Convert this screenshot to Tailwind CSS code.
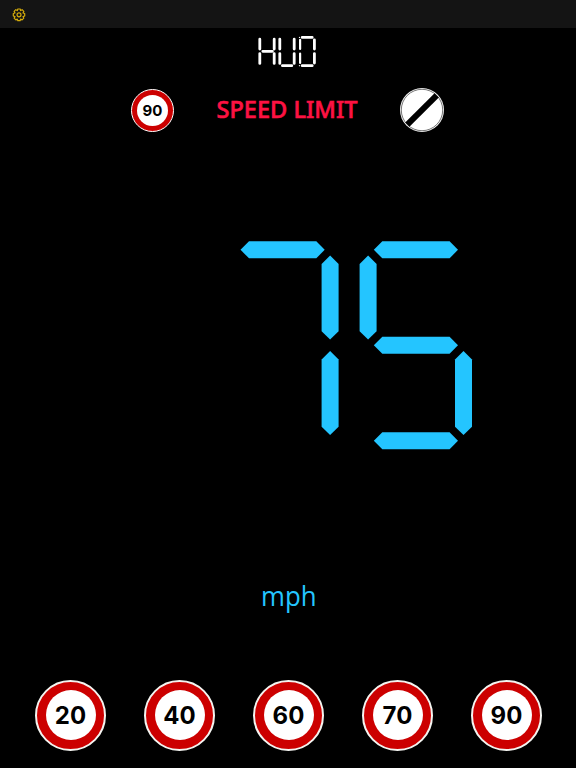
<!DOCTYPE html>
<html lang="en">
<head>
<meta charset="utf-8">
<title>HUD</title>
<script src="https://cdn.jsdelivr.net/npm/@tailwindcss/browser@4"></script>
</head>
<body class="bg-black">
<div class="flex h-[768px] w-[576px] flex-col overflow-hidden bg-black">
  <header class="flex h-7 shrink-0 items-center bg-[#141414] pl-3">
    <svg class="mt-px size-3.5" viewBox="0 0 14 14" fill="none" stroke="#d3ab0b">
      <path stroke-width="1.2" stroke-linejoin="round" d="M5.800 1h2.400l.4 1.600 1.500-.9 1.700 1.700-.8 1.600 1.700.5v2.500l-1.700.6.8 1.600-1.700 1.700-1.500-.8-.5 1.600H5.800l-.5-1.600-1.500.8-1.700-1.700.9-1.600-1.700-.6V5.500l1.700-.5-.9-1.600 1.700-1.700 1.500.9z"/>
      <circle cx="7" cy="6.800" r="2" stroke-width="1.200"/>
    </svg>
  </header>

  <div class="flex h-[47px] shrink-0 justify-center">
    <svg class="mt-2 h-8 w-[60px]" viewBox="257.500 36 60 32" role="img" aria-label="HUD" stroke="#fff" stroke-width="2.800" stroke-linecap="round">
      <path d="M259.300 39.200v9.800M259.300 53.600v9.800M262.300 51.300h9.600M273.700 39.200v9.800M273.700 53.600v9.800"/>
      <path d="M279.300 39.200v9.800M279.300 53.600v9.800M293.700 39.200v9.800M293.700 53.600v9.800M281.900 65.700h9.400"/>
      <path d="M301.700 37.400h10M313.900 39.800v9.200M313.900 53.600v9.400M301.700 65.700h10"/>
      <path stroke-width="2.200" d="M299.600 39.800v9.200M299.600 53.600v9.400"/>
      <path stroke-width="1.300" d="M299 37.300v.1M299 65.600v.1"/>
    </svg>
  </div>

  <div class="flex h-[70px] shrink-0 items-center justify-between pr-[132px] pl-[131px]">
    <div class="flex size-[43px] items-center justify-center rounded-full border border-white bg-[#cc0000]">
      <div class="flex size-[31px] items-center justify-center rounded-full bg-white pt-px font-[Inter,sans-serif] text-[15px] leading-none font-bold">90</div>
    </div>
    <svg class="block h-9 w-[144px] font-['Noto_Sans',sans-serif] text-[24px] font-medium" viewBox="0 0 144 36"><text x="1.500" y="25.500" textLength="141" lengthAdjust="spacingAndGlyphs" fill="#fd1242" stroke="#fd1242" stroke-width=".6">SPEED LIMIT</text></svg>
    <svg class="size-11" viewBox="0 0 44 44">
      <circle cx="22" cy="22" r="22" fill="#f4f4f4"/>
      <circle cx="22" cy="22" r="20.700" fill="#fff" stroke="#555" stroke-width=".8"/>
      <path d="M7.300 36.700 36.700 7.300" stroke="#000" stroke-width="6"/>
    </svg>
  </div>

  <main class="flex h-[405px] shrink-0 flex-col pt-[96px] pl-[240px]">
    <svg class="h-[209px] w-[233px]" viewBox="240 241 233 209" role="img" aria-label="75" fill="#24c5ff">
      <defs>
        <path id="bar" d="M0 8.500 8.500 0h67.300L84.200 8.500 75.800 17H8.500z"/>
        <path id="post" d="M8.500 0 17 8.500v67.300L8.500 84.200 0 75.800V8.500z"/>
      </defs>
      <use href="#bar" x="240.500" y="241.300"/>
      <use href="#post" x="321.600" y="255.400"/>
      <use href="#post" x="321.600" y="350.900"/>
      <use href="#bar" x="373.800" y="241.300"/>
      <use href="#post" x="359.600" y="255.400"/>
      <use href="#bar" x="373.800" y="336.800"/>
      <use href="#post" x="455" y="350.900"/>
      <use href="#bar" x="373.800" y="432.200"/>
    </svg>
  </main>

  <div class="flex h-[92px] shrink-0 items-center justify-center">
    <svg class="h-[48px] w-[64px] font-['Open_Sans',sans-serif] text-[27px]" viewBox="0 0 64 48"><text x="5" y="33.500" textLength="55.500" lengthAdjust="spacingAndGlyphs" fill="#24c5ff">mph</text></svg>
  </div>

  <footer class="flex grow items-center justify-between pt-[33px] pr-[34px] pb-[13px] pl-[35px] font-[Inter,sans-serif] text-[24px] leading-none font-bold text-black">
    <div class="flex size-[71px] items-center justify-center rounded-full border-2 border-[#f4f4f0] bg-[#cc0000]"><div class="flex size-[50px] items-center justify-center rounded-full bg-white pt-0.5">20</div></div>
    <div class="flex size-[71px] items-center justify-center rounded-full border-2 border-[#f4f4f0] bg-[#cc0000]"><div class="flex size-[50px] items-center justify-center rounded-full bg-white pt-0.5">40</div></div>
    <div class="flex size-[71px] items-center justify-center rounded-full border-2 border-[#f4f4f0] bg-[#cc0000]"><div class="flex size-[50px] items-center justify-center rounded-full bg-white pt-0.5">60</div></div>
    <div class="flex size-[71px] items-center justify-center rounded-full border-2 border-[#f4f4f0] bg-[#cc0000]"><div class="flex size-[50px] items-center justify-center rounded-full bg-white pt-0.5">70</div></div>
    <div class="flex size-[71px] items-center justify-center rounded-full border-2 border-[#f4f4f0] bg-[#cc0000]"><div class="flex size-[50px] items-center justify-center rounded-full bg-white pt-0.5">90</div></div>
  </footer>
</div>
</body>
</html>
